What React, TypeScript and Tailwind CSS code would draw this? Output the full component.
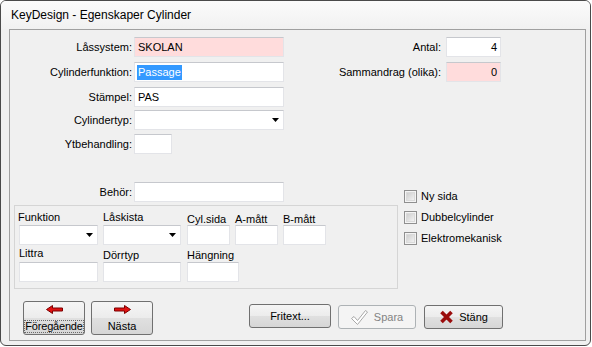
import React from "react";

type P = { className?: string; children?: React.ReactNode };

function Field({ className = "", children }: P) {
  return (
    <div
      className={`h-[20px] border border-[#e3e4e8] border-t-[#c6c8cd] flex items-center whitespace-nowrap ${className}`}
    >
      {children}
    </div>
  );
}

function Combo({ className = "" }: P) {
  return (
    <div
      className={`h-[20px] border border-[#e3e4e8] border-t-[#c6c8cd] bg-white flex items-center justify-end pr-[4px] ${className}`}
    >
      <svg width="7" height="4" viewBox="0 0 7 4">
        <path d="M0 0H7L3.5 4Z" fill="#000" />
      </svg>
    </div>
  );
}

function Check({ label }: { label: string }) {
  return (
    <div className="flex items-center h-[13px]">
      <div className="w-[13px] h-[13px] border border-[#8f8f8f] bg-[#f4f4f4] p-[1px]">
        <div className="w-full h-full bg-gradient-to-br from-[#cfcfcf] to-[#f2f2f2] border border-[#dadada]" />
      </div>
      <span className="ml-[4px]">{label}</span>
    </div>
  );
}

const btn =
  "border border-[#707070] rounded-[3px] bg-[linear-gradient(to_bottom,#f5f5f5_0%,#ececec_50%,#e0e0e0_51%,#d6d6d6_100%)]";

function ArrowLeft() {
  return (
    <svg width="17" height="9" viewBox="0 0 17 9">
      <path d="M0.5 4.5L6.5 0.5V3H16.5V6H6.5V8.5Z" fill="#e01010" stroke="#7a0000" strokeWidth="1" />
    </svg>
  );
}

function ArrowRight() {
  return (
    <svg width="17" height="9" viewBox="0 0 17 9">
      <path d="M16.5 4.5L10.5 0.5V3H0.5V6H10.5V8.5Z" fill="#e01010" stroke="#7a0000" strokeWidth="1" />
    </svg>
  );
}

export default function App() {
  return (
    <div className="w-[592px] h-[347px] bg-white font-['Liberation_Sans',Arial,sans-serif] text-[11px] leading-[13px] text-black">
      <div className="w-[591px] h-[346px] rounded-[6px] border border-[#4a4a4a] bg-[#f0f0f0] flex flex-col overflow-hidden">
        <div className="h-[28px] shrink-0 pl-[10px] flex items-center text-[12px] bg-gradient-to-b from-[#fbfbfb] to-[#f1f1f1]">
          KeyDesign - Egenskaper Cylinder
        </div>
        <div className="ml-[8px] w-[577px] h-[312px] border border-[#a0a0a0] flex flex-col pt-[7px]">
          {/* Row 1 */}
          <div className="flex items-center h-[20px]">
            <div className="w-[122px] text-right">Låssystem:</div>
            <Field className="ml-[2px] w-[150px] bg-[#ffdcdc] px-[3px]">SKOLAN</Field>
            <div className="w-[157px] text-right">Antal:</div>
            <Field className="ml-[5px] w-[55px] bg-white justify-end pr-[3px]">4</Field>
          </div>
          {/* Row 2 */}
          <div className="flex items-center h-[20px] mt-[5px]">
            <div className="w-[122px] text-right">Cylinderfunktion:</div>
            <Field className="ml-[2px] w-[150px] bg-white pl-[2px] border-[#c5d6e8] border-t-[#a9bfd6]">
              <span className="bg-[#3399ff] text-white px-[1px] leading-[15px]">Passage</span>
            </Field>
            <div className="w-[157px] text-right">Sammandrag (olika):</div>
            <Field className="ml-[5px] w-[55px] bg-[#ffdcdc] justify-end pr-[3px]">0</Field>
          </div>
          {/* Row 3 */}
          <div className="flex items-center h-[20px] mt-[5px]">
            <div className="w-[122px] text-right">Stämpel:</div>
            <Field className="ml-[2px] w-[150px] bg-white px-[3px]">PAS</Field>
          </div>
          {/* Row 4 */}
          <div className="flex items-center h-[20px] mt-[3px]">
            <div className="w-[122px] text-right">Cylindertyp:</div>
            <Combo className="ml-[2px] w-[150px]" />
          </div>
          {/* Row 5 */}
          <div className="flex items-center h-[20px] mt-[4px]">
            <div className="w-[122px] text-right">Ytbehandling:</div>
            <Field className="ml-[2px] w-[38px] bg-white" />
          </div>

          {/* Bottom section */}
          <div className="flex mt-[28px]">
            <div className="w-[389px] flex flex-col">
              <div className="flex items-center h-[20px]">
                <div className="w-[122px] text-right">Behör:</div>
                <Field className="ml-[2px] w-[150px] bg-white" />
              </div>
              <div className="ml-[4px] mt-[3px] w-[384px] h-[84px] border border-[#d5d5d5] flex flex-col pl-[3px]">
                <div className="flex">
                  <div className="w-[79px] ml-[1px] flex flex-col">
                    <div className="h-[19px] pt-[5px] -ml-[1px]">Funktion</div>
                    <Combo className="w-[79px]" />
                  </div>
                  <div className="w-[78px] ml-[5px] flex flex-col">
                    <div className="h-[19px] pt-[5px]">Låskista</div>
                    <Combo className="w-[78px]" />
                  </div>
                  <div className="w-[43px] ml-[6px] flex flex-col">
                    <div className="h-[19px] pt-[7px]">Cyl.sida</div>
                    <Field className="w-[43px] bg-white" />
                  </div>
                  <div className="w-[43px] ml-[5px] flex flex-col">
                    <div className="h-[19px] pt-[7px]">A-mått</div>
                    <Field className="w-[43px] bg-white" />
                  </div>
                  <div className="w-[43px] ml-[5px] flex flex-col">
                    <div className="h-[19px] pt-[7px]">B-mått</div>
                    <Field className="w-[43px] bg-white" />
                  </div>
                </div>
                <div className="flex">
                  <div className="w-[79px] ml-[1px] flex flex-col">
                    <div className="h-[17px] pt-[2px]">Littra</div>
                    <Field className="w-[79px] bg-white" />
                  </div>
                  <div className="w-[78px] ml-[5px] flex flex-col">
                    <div className="h-[17px] pt-[4px]">Dörrtyp</div>
                    <Field className="w-[78px] bg-white" />
                  </div>
                  <div className="w-[52px] ml-[6px] flex flex-col">
                    <div className="h-[17px] pt-[4px]">Hängning</div>
                    <Field className="w-[52px] bg-white" />
                  </div>
                </div>
              </div>
            </div>
            <div className="ml-[5px] pt-[8px] flex flex-col gap-[8px]">
              <Check label="Ny sida" />
              <Check label="Dubbelcylinder" />
              <Check label="Elektromekanisk" />
            </div>
          </div>

          {/* Buttons */}
          <div className="flex items-start mt-[12px] pl-[13px]">
            <div className={`${btn} w-[62px] h-[34px] flex flex-col items-center pt-[3px]`}>
              <ArrowLeft />
              <span className="mt-auto mb-[1px] border border-dotted border-[#6a6a6a] px-[0px] leading-[11px] tracking-[-0.2px]">
                Föregående
              </span>
            </div>
            <div className={`${btn} ml-[6px] w-[62px] h-[34px] flex flex-col items-center pt-[3px]`}>
              <ArrowRight />
              <span className="mt-auto mb-[2px] leading-[11px]">Nästa</span>
            </div>
            <div className={`${btn} ml-[96px] mt-[3px] w-[82px] h-[24px] flex items-center justify-center`}>
              Fritext...
            </div>
            <div className="ml-[7px] mt-[4px] w-[78px] h-[24px] border border-[#adb2b5] rounded-[3px] bg-[#f4f4f4] flex items-center justify-center text-[#838383]">
              <svg width="17" height="15" viewBox="0 0 17 15">
                <path
                  d="M0.5 8.5L3 6.5L6.5 10.5L14.5 0.5L16.5 2L6.5 14.5Z"
                  fill="#ffffff"
                  stroke="#a8a8a8"
                  strokeWidth="1"
                  strokeLinejoin="round"
                />
              </svg>
              <span className="ml-[6px]">Spara</span>
            </div>
            <div className={`${btn} ml-[8px] mt-[4px] w-[79px] h-[24px] flex items-center justify-center border-[#3c3c3c]`}>
              <svg width="15" height="14" viewBox="0 0 15 14">
                <path d="M2.5 2L12.5 12M12.5 2L2.5 12" stroke="#9a0d0d" strokeWidth="3.6" strokeLinecap="butt" />
              </svg>
              <span className="ml-[5px]">Stäng</span>
            </div>
          </div>
        </div>
      </div>
    </div>
  );
}
